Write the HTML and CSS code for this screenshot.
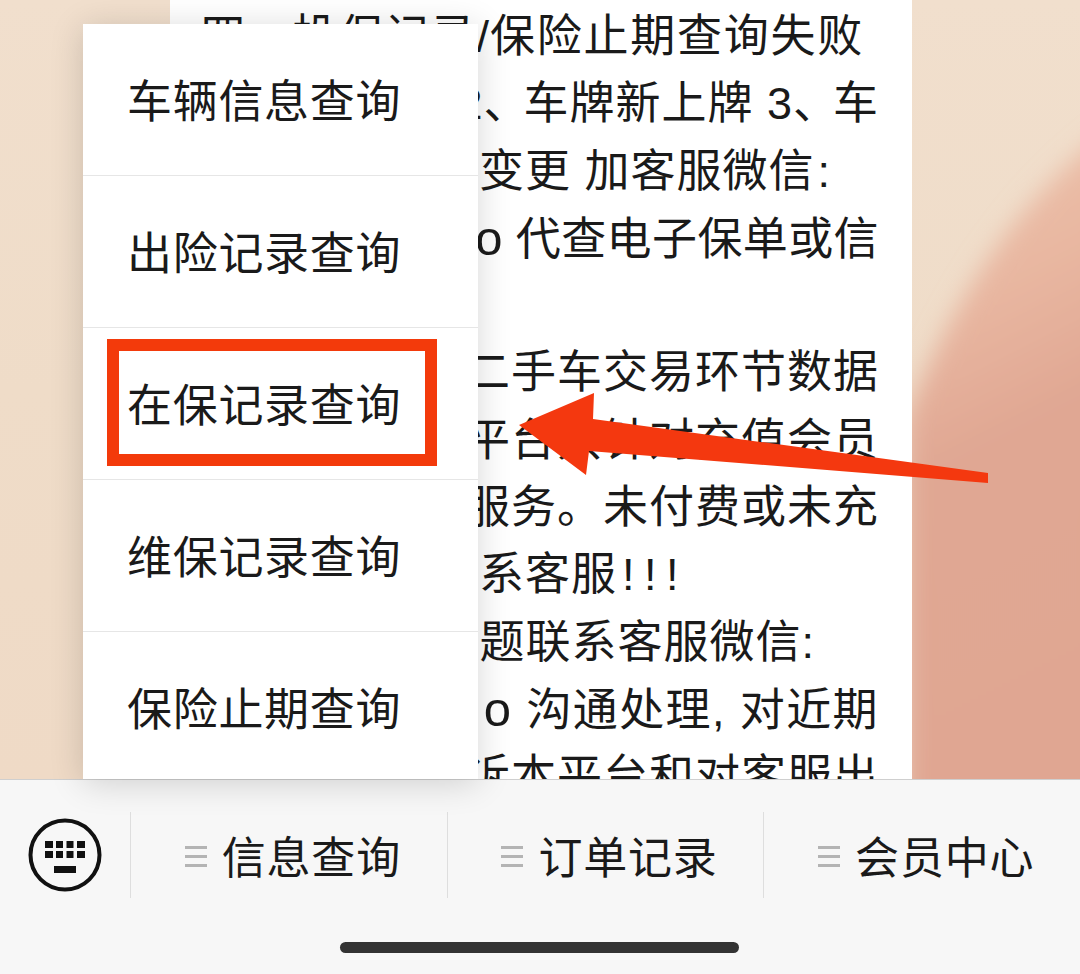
FILE: index.html
```html
<!DOCTYPE html>
<html lang="zh-CN">
<head>
<meta charset="utf-8">
<title>在保记录查询</title>
<link rel="stylesheet" href="styles.css">
</head>
<body>
<div class="screen">
  <main class="page">
    <svg class="wallpaper" viewBox="0 0 1080 779" aria-hidden="true">
      <defs>
        <linearGradient id="blob" x1="0" y1="0" x2="0.15" y2="1">
          <stop offset="0" stop-color="#eec5ae"/>
          <stop offset="0.3" stop-color="#e8b6a0"/>
          <stop offset="0.5" stop-color="#e0a793"/>
          <stop offset="1" stop-color="#e0a692"/>
        </linearGradient>
        <filter id="soft"><feGaussianBlur stdDeviation="12"/></filter>
      </defs>
      <path d="M1110 130C1030 190 960 280 905 420V820H1110Z" fill="url(#blob)" filter="url(#soft)"/>
    </svg>
    <article class="sheet">
      <p class="line end-1">四、投保记录/<span class="wide">保险止期查询失败</span></p>
      <p class="line">2<span class="dun">、</span>车牌新上牌 3<span class="dun">、</span>车</p>
      <p class="line end-3">变更 加客服微信<span class="colon">:</span></p>
      <p class="line tight"><span class="latin">o</span> 代查电子保单或信</p>
      <p class="line">&nbsp;</p>
      <p class="line">二手车交易环节数据</p>
      <p class="line">平台只针对充值会员</p>
      <p class="line">服务。未付费或未充</p>
      <p class="line end-9">系客服<span class="bangs">!!!</span></p>
      <p class="line end-10">题联系客服微信:</p>
      <p class="line loose"><span class="latin">o</span> 沟通处理, 对近期</p>
      <p class="line">诉本平台和对客服出</p>
    </article>
  </main>

  <nav class="menu">
    <a class="menu-item">车辆信息查询</a>
    <a class="menu-item">出险记录查询</a>
    <a class="menu-item">在保记录查询</a>
    <a class="menu-item">维保记录查询</a>
    <a class="menu-item">保险止期查询</a>
  </nav>

  <footer class="bar">
    <div class="tabs">
      <div class="kbd-cell">
        <svg class="kbd" viewBox="0 0 74 74" aria-hidden="true">
          <circle cx="37" cy="37" r="34.5" fill="none" stroke="#111" stroke-width="4"/>
          <g fill="#111">
            <rect x="17" y="23" width="8" height="7"/><rect x="28" y="23" width="7" height="7"/><rect x="38.5" y="23" width="7" height="7"/><rect x="49" y="23" width="8" height="7"/>
            <rect x="17" y="33" width="8" height="7"/><rect x="28" y="33" width="7" height="7"/><rect x="38.5" y="33" width="7" height="7"/><rect x="49" y="33" width="8" height="7"/>
            <rect x="26" y="48" width="22" height="7"/>
          </g>
        </svg>
      </div>
      <div class="tab"><span class="burger"></span><span>信息查询</span></div>
      <div class="tab"><span class="burger"></span><span>订单记录</span></div>
      <div class="tab"><span class="burger"></span><span>会员中心</span></div>
    </div>
    <div class="home"></div>
  </footer>

  <div class="highlight"></div>
  <svg class="arrow" viewBox="0 0 1080 974" aria-hidden="true">
    <path d="M519 425L594 393L593 419L988 473V483L589 451L586 475Z" fill="#f4380f"/>
  </svg>
</div>
</body>
</html>
```

FILE: styles.css
```css
* { box-sizing: border-box; }

html, body {
  margin: 0;
  padding: 0;
  background: #f7f7f7;
}

.screen {
  position: relative;
  display: flex;
  flex-direction: column;
  width: 1080px;
  height: 974px;
  overflow: hidden;
  font-family: "Liberation Sans", "Noto Sans CJK SC", sans-serif;
  color: #1a1a1a;
}

.page {
  position: relative;
  height: 779px;
  flex: none;
  overflow: hidden;
  background: linear-gradient(180deg, #f1dfcd 0%, #efdcc8 50%, #efdac6 100%);
}

.wallpaper {
  position: absolute;
  inset: 0;
  width: 1080px;
  height: 779px;
}

.sheet {
  position: relative;
  width: 742px;
  height: 779px;
  margin-left: 170px;
  padding: 3px 33px 0 0;
  background: #fff;
}

.line {
  margin: 0;
  height: 67.3px;
  line-height: 67.3px;
  font-size: 45px;
  letter-spacing: 1px;
  white-space: nowrap;
  text-align: right;
}

.end-1 { padding-right: 15px; }
.end-3 { padding-right: 48px; }
.end-9 { padding-right: 191px; }
.end-10 { padding-right: 64px; }

.tight { letter-spacing: 0.4px; }
.loose { letter-spacing: 1.4px; }
.wide { letter-spacing: 1.75px; }

.dun { letter-spacing: -5px; }
.colon { margin-left: 3px; }
.latin { font-size: 49px; }

.bangs {
  margin-left: 5px;
  letter-spacing: 9.5px;
}

.menu {
  position: absolute;
  left: 83px;
  top: 24px;
  width: 395px;
  height: 755px;
  overflow: hidden;
  background: #fff;
  box-shadow: 0 4px 32px rgba(0, 0, 0, 0.16);
  z-index: 2;
}

.menu-item {
  display: flex;
  align-items: center;
  height: 152px;
  padding: 0 0 3px 44px;
  font-size: 45px;
  letter-spacing: 0.7px;
  border-bottom: 1px solid #e6e6e6;
  white-space: nowrap;
}

.bar {
  position: relative;
  flex: 1;
  display: flex;
  flex-direction: column;
  background: #f7f7f7;
  border-top: 1px solid #cfcfcf;
  z-index: 1;
}

.tabs {
  display: flex;
  height: 86px;
  margin-top: 32px;
}

.kbd-cell {
  display: flex;
  align-items: center;
  justify-content: center;
  width: 130px;
  padding-right: 1px;
}

.kbd {
  width: 74px;
  height: 74px;
}

.tab {
  flex: 1;
  display: flex;
  align-items: center;
  justify-content: center;
  gap: 15px;
  padding-left: 8px;
  font-size: 44px;
  letter-spacing: 0.8px;
  border-left: 1px solid #dedede;
  white-space: nowrap;
}

.burger {
  width: 22px;
  height: 21px;
  flex: none;
  margin-top: 2px;
  background: repeating-linear-gradient(180deg, #b4b4b4 0 3px, transparent 3px 9px);
}

.home {
  width: 399px;
  height: 11px;
  margin: 44px 0 0 340px;
  border-radius: 6px;
  background: #333;
}

.highlight {
  position: absolute;
  left: 107px;
  top: 339px;
  width: 330px;
  height: 127px;
  border: 12px solid #f33a0b;
  z-index: 3;
}

.arrow {
  position: absolute;
  inset: 0;
  width: 1080px;
  height: 974px;
  z-index: 4;
  pointer-events: none;
}
```
